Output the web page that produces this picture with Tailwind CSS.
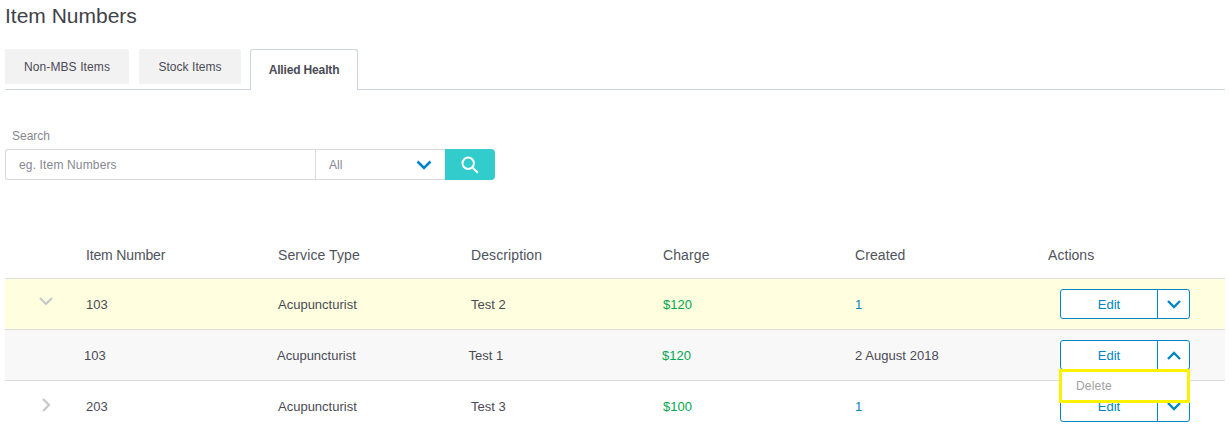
<!DOCTYPE html>
<html lang="en">
<head>
    <meta charset="UTF-8">
    <title>Item Numbers</title>
    <script src="https://cdn.jsdelivr.net/npm/@tailwindcss/browser@4"></script>
</head>
<body class="bg-white font-['Liberation_Sans',Arial,sans-serif] text-[#4a4a55] overflow-hidden">
    <div class="w-[1229px] h-[441px] pl-[5px] pr-[4px] relative">
        <!-- Title -->
        <h1 class="text-[21px] leading-[24px] pt-[4px] h-[49px] text-[#3f4248]">Item Numbers</h1>

        <!-- Tabs -->
        <div class="flex items-start h-[41px] border-b border-[#cdd3da] text-[12px]">
            <div class="w-[124px] h-[35px] mr-[10px] bg-[#f2f2f2] rounded-t-[2px] flex items-center justify-center tracking-[0.1px]">Non-MBS Items</div>
            <div class="w-[102px] h-[35px] mr-[9px] bg-[#f2f2f2] rounded-t-[2px] flex items-center justify-center tracking-[0.05px]">Stock Items</div>
            <div class="w-[108px] h-[41px] bg-white border border-b-0 border-[#cdd3da] rounded-t-[3px] flex items-center justify-center font-bold relative z-10 tracking-[-0.15px]">Allied Health</div>
        </div>

        <!-- Search -->
        <div class="text-[12px] leading-[14px] text-[#85878f] pl-[7px] pt-[39px]">Search</div>
        <div class="flex w-[490px] h-[31px] mt-[6px] text-[12px] text-[#85878f]">
            <div class="w-[310px] border border-r-0 border-[#d8dadd] rounded-l-[3px] flex items-center pl-[13px] tracking-[0.15px]">eg. Item Numbers</div>
            <div class="w-[130px] border border-[#d8dadd] border-r-0 flex items-center justify-between pl-[13px] pr-[13px]">
                <span>All</span>
                <svg width="16" height="10" viewBox="0 0 16 10" fill="none" stroke="#0085c3" stroke-width="2.6"><path d="M1.5 1.5 8 8l6.5-6.5"/></svg>
            </div>
            <div class="w-[50px] bg-[#33cccc] rounded-r-[4px] flex items-center justify-center">
                <svg width="18" height="18" viewBox="0 0 18 18" fill="none" stroke="#fff" stroke-width="2"><circle cx="7.2" cy="7.2" r="5.7"/><path d="m11.4 11.4 5.4 5.4"/></svg>
            </div>
        </div>

        <!-- Table head -->
        <div class="grid grid-cols-[81px_192.5px_192.5px_192px_192px_193px_1fr] items-center h-[48px] mt-[51px] pt-[1px] text-[14px] text-[#50535b] border-b border-[#dddddd]">
            <div></div>
            <div class="tracking-[-0.15px]">Item Number</div>
            <div class="-ml-[0.5px] tracking-[0.1px]">Service Type</div>
            <div class="tracking-[0.1px]">Description</div>
            <div class="tracking-[0.1px]">Charge</div>
            <div class="tracking-[0.1px]">Created</div>
            <div class="tracking-[0.05px]">Actions</div>
        </div>

        <!-- Row 1 -->
        <div class="grid grid-cols-[81px_192.5px_192.5px_192px_192px_193px_1fr] items-center h-[51px] bg-[#ffffdf] text-[13px] border-b border-[#dddddd]">
            <div class="pl-[34px] pb-[5px]">
                <svg width="14" height="9" viewBox="0 0 14 9" fill="none" stroke="#c8c8c8" stroke-width="2.2"><path d="M1 1l6 6 6-6"/></svg>
            </div>
            <div class="pt-[2px]">103</div>
            <div class="pt-[2px] -ml-[0.5px]">Acupuncturist</div>
            <div class="pt-[2px]">Test 2</div>
            <div class="pt-[2px] text-[#00a651]">$120</div>
            <div class="pt-[2px] text-[#0085c3]">1</div>
            <div class="pl-[12px]">
                <div class="flex w-[130px] h-[30px] bg-white border border-[#0085c3] rounded-[3px] text-[#0085c3]">
                    <div class="w-[97px] pt-[2px] border-r border-[#0085c3] flex items-center justify-center">Edit</div>
                    <div class="flex-1 flex items-center justify-center">
                        <svg width="14" height="9" viewBox="0 0 14 9" fill="none" stroke="#0085c3" stroke-width="2.4"><path d="M1 1l6 6 6-6"/></svg>
                    </div>
                </div>
            </div>
        </div>

        <!-- Row 2, expanded -->
        <div class="grid grid-cols-[79px_193px_192px_193px_193px_205px_1fr] items-center h-[51px] bg-[#f8f8f8] text-[13px] border-b border-[#dddddd]">
            <div></div>
            <div class="pt-[2px]">103</div>
            <div class="pt-[2px]">Acupuncturist</div>
            <div class="pt-[2px] -ml-[0.5px]">Test 1</div>
            <div class="pt-[2px] text-[#00a651]">$120</div>
            <div class="pt-[2px] tracking-[0.05px]">2 August 2018</div>
            <div>
                <div class="flex w-[130px] h-[30px] bg-white border border-[#0085c3] rounded-[3px] text-[#0085c3]">
                    <div class="w-[97px] pt-[2px] border-r border-[#0085c3] flex items-center justify-center">Edit</div>
                    <div class="flex-1 flex items-center justify-center">
                        <svg width="14" height="9" viewBox="0 0 14 9" fill="none" stroke="#0085c3" stroke-width="2.4"><path d="M1 8l6-6 6 6"/></svg>
                    </div>
                </div>
            </div>
        </div>

        <!-- Row 3 -->
        <div class="grid grid-cols-[81px_192.5px_192.5px_192px_192px_193px_1fr] items-center h-[51px] text-[13px]">
            <div class="pl-[37px] pb-[3px]">
                <svg width="9" height="14" viewBox="0 0 9 14" fill="none" stroke="#c8c8c8" stroke-width="2.2"><path d="M1 1l6 6-6 6"/></svg>
            </div>
            <div>203</div>
            <div class="-ml-[0.5px]">Acupuncturist</div>
            <div>Test 3</div>
            <div class="text-[#00a651]">$100</div>
            <div class="text-[#0085c3]">1</div>
            <div class="pl-[12px]">
                <div class="flex w-[130px] h-[30px] bg-white border border-[#0085c3] rounded-[3px] text-[#0085c3]">
                    <div class="w-[97px] border-r border-[#0085c3] flex items-center justify-center">Edit</div>
                    <div class="flex-1 flex items-center justify-center">
                        <svg width="14" height="9" viewBox="0 0 14 9" fill="none" stroke="#0085c3" stroke-width="2.4"><path d="M1 1l6 6 6-6"/></svg>
                    </div>
                </div>
            </div>
        </div>

        <!-- Delete menu, highlighted -->
        <div class="absolute left-[1059px] top-[369px] w-[131px] h-[34px] bg-white border-[3px] border-[#fff200] flex items-center pl-[14px] text-[12px] text-[#a0a0a0] tracking-[0.2px]">Delete</div>
    </div>
</body>
</html>
